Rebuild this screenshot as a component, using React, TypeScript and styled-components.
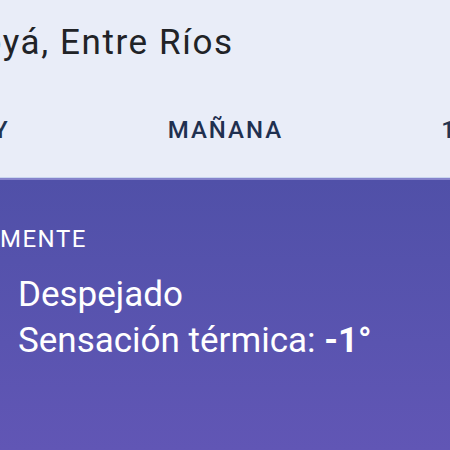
import React from 'react';
import styled, { createGlobalStyle } from 'styled-components';

const GlobalStyle = createGlobalStyle`
  html, body {
    margin: 0;
    padding: 0;
    width: 450px;
    height: 450px;
    overflow: hidden;
    font-family: Roboto, "Noto Sans", "Liberation Sans", sans-serif;
  }
`;

const Screen = styled.div`
  width: 450px;
  height: 450px;
  display: flex;
  flex-direction: column;
  overflow: hidden;
`;

const Header = styled.header`
  height: 177px;
  flex-shrink: 0;
  background: #e9edf8;
  border-bottom: 1px solid #c9d6ef;
  display: flex;
  flex-direction: column;
`;

const City = styled.h1`
  margin: 22px 0 0 -88px;
  font-size: 35px;
  line-height: 41px;
  font-weight: 400;
  letter-spacing: 1.6px;
  color: #212327;
  white-space: nowrap;
`;

const Tabs = styled.nav`
  display: flex;
  gap: 158px;
  margin: 53px 0 0 -44px;
  white-space: nowrap;
`;

const Tab = styled.span<{ $active?: boolean }>`
  font-size: 24px;
  line-height: 28px;
  font-weight: 500;
  letter-spacing: 2px;
  color: ${p => (p.$active ? '#1f3050' : '#24344f')};
`;

const Panel = styled.section`
  flex: 1;
  border-top: 2px solid #8583cc;
  background: linear-gradient(180deg, #5050a8 0%, #5a54b0 60%, #6156b5 100%);
  color: #ffffff;
  display: flex;
  flex-direction: column;
`;

const NowLabel = styled.div`
  margin: 45px 0 0 -98px;
  font-size: 24px;
  line-height: 28px;
  letter-spacing: 1.5px;
  white-space: nowrap;
`;

const Details = styled.div`
  margin-top: 19px;
  padding-left: 18px;
  font-size: 35px;
  line-height: 46px;
`;

const Strong = styled.b`
  font-weight: 700;
`;

export default function App() {
  return (
    <>
      <GlobalStyle />
      <Screen>
        <Header>
          <City>Nogoyá, Entre Ríos</City>
          <Tabs>
            <Tab>HOY</Tab>
            <Tab $active>MAÑANA</Tab>
            <Tab>10 DÍAS</Tab>
          </Tabs>
        </Header>
        <Panel>
          <NowLabel>ACTUALMENTE</NowLabel>
          <Details>
            <div>Despejado</div>
            <div>
              Sensación térmica: <Strong>-1°</Strong>
            </div>
          </Details>
        </Panel>
      </Screen>
    </>
  );
}
